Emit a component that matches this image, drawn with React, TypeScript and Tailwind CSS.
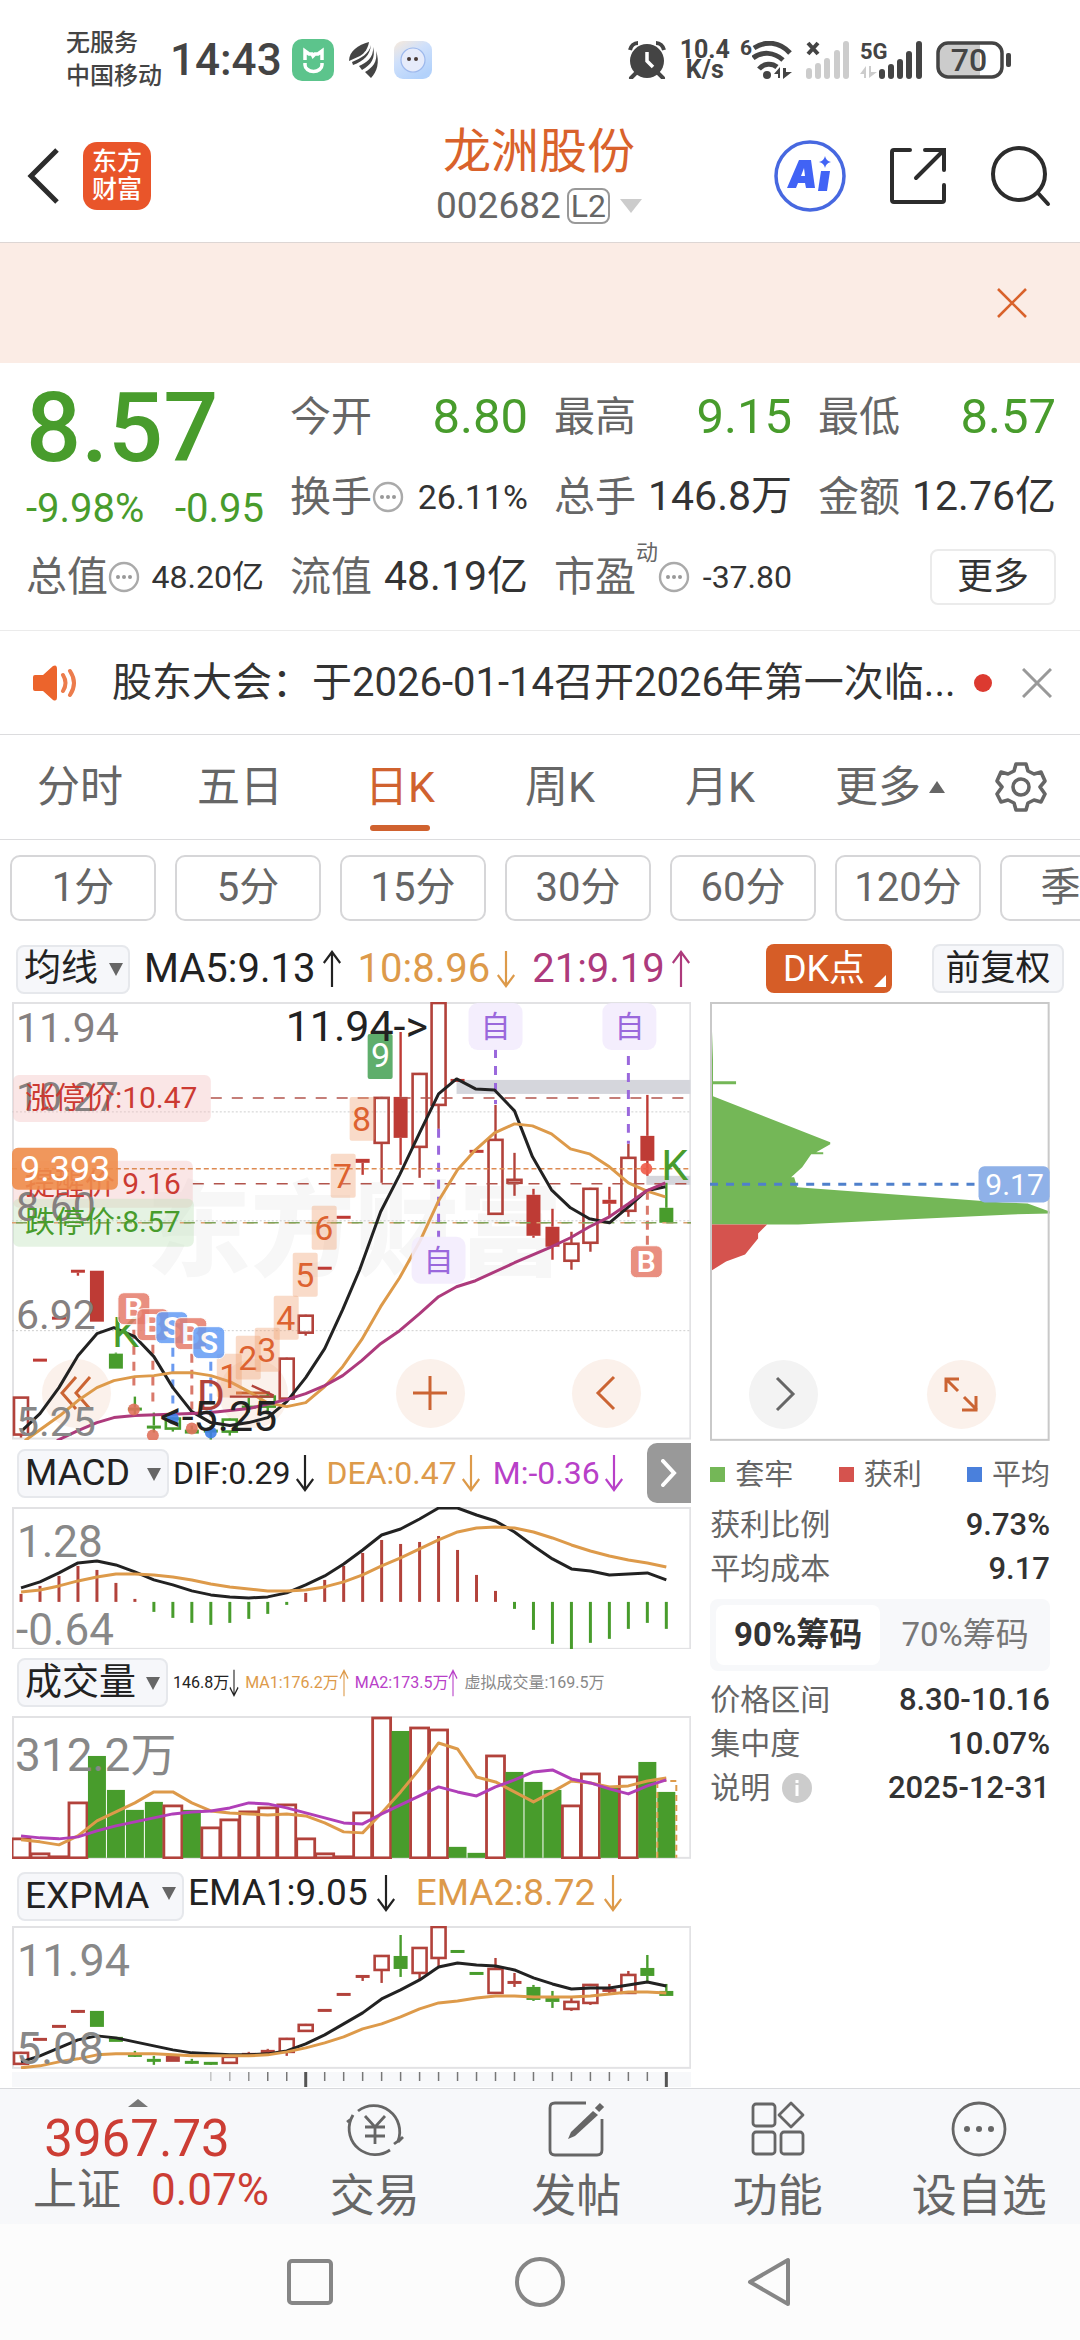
import { ReactNode } from 'react';
import clsx from 'clsx';

type Kind = 'up' | 'down' | 'green' | 'greenUp';
// [high, bodyTop, bodyBottom, low, kind]
type Candle = [number, number, number, number, Kind];

const STEP = 19;
const RED = '#b2423b';
const GREEN = '#489c2c';

const centerX = (index: number) => 9 + index * STEP;

const dailyCandles: Candle[] = [
  [396, 396, 433, 436, 'up'],
  [357, 357, 359, 359, 'down'],
  [315, 315, 317, 317, 'down'],
  [268, 268, 271, 274, 'down'],
  [269, 269, 320, 320, 'down'],
  [351, 352, 367, 367, 'green'],
  [395, 406, 408, 413, 'green'],
  [411, 424, 426, 431, 'green'],
  [416, 417, 427, 430, 'greenUp'],
  [424, 428, 432, 432, 'green'],
  [424, 428, 430, 438, 'green'],
  [417, 418, 430, 434, 'greenUp'],
  [396, 404, 406, 411, 'green'],
  [390, 395, 405, 410, 'greenUp'],
  [356, 357, 397, 397, 'up'],
  [313, 314, 331, 334, 'up'],
  [265, 265, 267, 267, 'down'],
  [214, 214, 216, 216, 'down'],
  [157, 157, 161, 173, 'down'],
  [95, 96, 141, 181, 'up'],
  [30, 95, 136, 163, 'down'],
  [71, 72, 145, 176, 'up'],
  [1, 1, 103, 127, 'up'],
  [77, 77, 79, 79, 'down'],
  [148, 148, 150, 150, 'down'],
  [103, 138, 212, 213, 'up'],
  [151, 178, 181, 194, 'up'],
  [187, 193, 234, 236, 'down'],
  [207, 225, 245, 258, 'down'],
  [230, 242, 259, 268, 'up'],
  [186, 187, 241, 250, 'up'],
  [185, 198, 202, 216, 'down'],
  [142, 156, 209, 215, 'up'],
  [93, 134, 159, 174, 'down'],
  [181, 206, 221, 221, 'green'],
];

const expmaCandles: Candle[] = [
  [126, 127, 138, 138, 'up'],
  [112, 112, 114, 114, 'down'],
  [99, 99, 101, 101, 'down'],
  [84, 84, 86, 87, 'down'],
  [85, 85, 101, 101, 'green'],
  [111, 111, 116, 116, 'green'],
  [125, 128, 130, 131, 'green'],
  [130, 133, 135, 139, 'green'],
  [130, 130, 136, 136, 'down'],
  [133, 135, 137, 138, 'green'],
  [136, 136, 138, 139, 'green'],
  [130, 131, 137, 137, 'up'],
  [126, 127, 130, 130, 'down'],
  [123, 124, 128, 130, 'down'],
  [112, 113, 126, 130, 'up'],
  [98, 99, 105, 106, 'up'],
  [83, 83, 85, 85, 'down'],
  [67, 67, 69, 69, 'down'],
  [49, 49, 51, 55, 'down'],
  [29, 30, 44, 57, 'up'],
  [9, 30, 43, 51, 'green'],
  [21, 22, 47, 53, 'up'],
  [1, 1, 32, 40, 'up'],
  [24, 24, 26, 26, 'green'],
  [46, 46, 48, 48, 'green'],
  [32, 43, 67, 67, 'up'],
  [47, 55, 58, 61, 'down'],
  [59, 61, 74, 75, 'green'],
  [65, 71, 76, 82, 'green'],
  [72, 76, 83, 85, 'up'],
  [58, 59, 77, 79, 'up'],
  [58, 63, 65, 69, 'down'],
  [45, 49, 67, 67, 'up'],
  [29, 42, 50, 57, 'green'],
  [58, 65, 70, 70, 'green'],
];

const ma5 =
  '9,430 28,412 47,386 66,354 85,332 102,326 123,335 142,355 161,386 180,410 199,421 218,424 237,421 256,416 275,400 294,376 313,347 331,308 348,268 369,210 388,173 408,131 427,92 445,77 464,87 483,88 503,109 521,155 540,188 559,206 578,217 598,221 617,205 635,189 654,185';
const ma10 =
  '13,439 48,414 66,399 85,386 102,379 123,375 142,374 161,371 180,371 199,374 218,380 237,390 255,401 275,405 294,401 313,385 331,365 350,338 369,305 388,276 408,240 427,199 446,168 464,148 483,131 503,122 521,124 540,132 559,147 578,152 598,165 617,181 635,189 654,195';
const ma21 =
  '45,439 66,429 85,421 102,416 123,414 180,412 199,411 237,407 275,398 294,392 313,384 331,374 350,359 369,342 388,329 408,312 427,295 445,285 464,279 503,261 540,245 559,236 578,225 598,215 617,202 635,189 654,181';

const macdBars = [
  87, 79, 69, 59, 63, 76, 92, 105, 111, 116, 118, 116, 112, 107, 98, 86, 73, 59, 46, 33, 37, 35, 29,
  43, 68, 84, 102, 123, 137, 143, 136, 132, 122, 116, 122,
];
const dif = [
  81, 75, 66, 56, 54, 58, 65, 73, 78, 84, 88, 90, 91, 90, 86, 78, 69, 57, 43, 28, 22, 12, 1, 1, 8, 14,
  25, 39, 52, 62, 64, 68, 67, 66, 73,
];
const dea = [
  85, 83, 79, 74, 70, 67, 67, 68, 70, 73, 77, 80, 82, 84, 84, 83, 80, 75, 68, 59, 51, 42, 33, 25, 21,
  20, 21, 25, 31, 38, 44, 49, 53, 56, 60,
];

const volumes = [
  122, 137, 140, 86, 40, 74, 94, 86, 89, 94, 111, 103, 95, 91, 88, 122, 137, 140, 96, 1, 15, 11, 13,
  131, 137, 39, 56, 66, 74, 89, 57, 70, 60, 46, 76,
];
const fallingDays = [4, 5, 6, 7, 9, 20, 23, 24, 26, 27, 28, 31, 33, 34];
const volMa1 = [
  124, 126, 129, 120, 105, 96, 87, 76, 76, 87, 95, 97, 98, 99, 98, 100, 107, 116, 117, 97, 76, 53, 27,
  33, 61, 66, 76, 86, 76, 65, 67, 71, 70, 65, 62,
];
const volMa2 = [
  120, 122, 123, 121, 115, 110, 106, 102, 98, 96, 95, 92, 87, 88, 92, 97, 102, 107, 108, 98, 89, 80,
  71, 76, 80, 71, 64, 56, 54, 63, 67, 73, 78, 70, 64,
];

const ema1 = [
  136, 130, 122, 114, 110, 112, 116, 120, 124, 127, 128, 129, 129, 128, 125, 118, 109, 98, 87, 73, 64,
  54, 41, 37, 39, 40, 44, 52, 58, 63, 62, 62, 59, 56, 60,
];
const ema2 = [
  142, 140, 136, 133, 129, 128, 128, 128, 129, 130, 130, 130, 130, 129, 126, 122, 117, 111, 103, 98,
  91, 83, 77, 75, 72, 70, 70, 71, 71, 71, 70, 68, 66, 66, 67,
];

const toPoints = (values: number[]) => values.map((y, i) => `${centerX(i)},${y}`).join(' ');

interface LineProps {
  points: string;
  color: string;
  width?: number;
}

const Line = ({ points, color, width = 3 }: LineProps) => (
  <polyline points={points} fill="none" stroke={color} strokeWidth={width} strokeLinejoin="round" />
);

const Candles = ({ data, solid = '#be3b35' }: { data: Candle[]; solid?: string }) => (
  <g>
    {data.map(([high, top, bottom, low, kind], i) => {
      const x = centerX(i);
      const color = kind === 'green' || kind === 'greenUp' ? GREEN : kind === 'down' ? solid : RED;
      const hollow = kind === 'up' || kind === 'greenUp';
      return (
        <g key={i}>
          {high < top && <path d={`M${x} ${high}V${top}`} stroke={color} strokeWidth="2.4" />}
          {low > bottom && <path d={`M${x} ${bottom}V${low}`} stroke={color} strokeWidth="2.4" />}
          <rect
            x={x - 7}
            y={top}
            width={14}
            height={Math.max(bottom - top, 3)}
            fill={hollow ? 'none' : color}
            stroke={hollow ? color : 'none'}
            strokeWidth="2.6"
          />
        </g>
      );
    })}
  </g>
);

const Frame = ({ height }: { height: number }) => (
  <rect x="1" y="1" width="678" height={height - 2} fill="none" stroke="#e2e2e4" strokeWidth="2" />
);

const SelfMark = ({ x, y }: { x: number; y: number }) => (
  <g>
    <rect x={x} y={y} width="54" height="47" rx="9" fill="#f3ecfd" fillOpacity="0.9" />
    <text x={x + 27} y={y + 34} textAnchor="middle" fontSize="30" fill="#9a68dc">
      自
    </text>
  </g>
);

const TradeMark = ({ x, y, type }: { x: number; y: number; type: 'B' | 'S' }) => (
  <g opacity="0.9">
    <rect
      x={x}
      y={y}
      width="32"
      height="32"
      rx="6"
      fill={type === 'B' ? '#e67c6c' : '#649cf5'}
      stroke="#fff"
      strokeWidth="1"
      fillOpacity="0.95"
    />
    <text x={x + 16} y={y + 26} textAnchor="middle" fontSize="30" fontWeight="600" fill="#fff">
      {type}
    </text>
  </g>
);

const countMarks = [
  { n: 1, x: 205, y: 352 },
  { n: 2, x: 224, y: 334 },
  { n: 3, x: 243, y: 326 },
  { n: 4, x: 262, y: 294 },
  { n: 5, x: 281, y: 251 },
  { n: 6, x: 300, y: 204 },
  { n: 7, x: 319, y: 152 },
  { n: 8, x: 338, y: 95 },
];

const DailyChart = () => (
  <svg
    viewBox="0 0 680 438"
    className="pointer-events-none relative block h-auto w-full"
    role="img"
    aria-label="日K"
  >
    <text x="135" y="266" fontSize="104" fontWeight="800" fill="#f7f7f7">
      东方财富
    </text>
    <Frame height={438} />
    <g stroke="#cfcfcf" strokeWidth="1" strokeDasharray="2 2">
      <path d="M0 110H680M0 219H680M0 329H680" />
    </g>
    <rect x="445" y="78" width="234" height="14" fill="#d5d6dc" />
    <rect x="635" y="174" width="44" height="9" fill="#d5d6dc" />

    <Candles data={dailyCandles} />

    <path d="M122 328V384M141 343V400M180 352V408" stroke="#d9796b" strokeWidth="3" strokeDasharray="9 7" />
    <path d="M161 346V402M199 360V415" stroke="#6a9af0" strokeWidth="3" strokeDasharray="9 7" />
    <path d="M484 47V102M617 54V142M427 127V236" stroke="#9a68dc" strokeWidth="3" strokeDasharray="9 8" />
    <path d="M636 189V244" stroke="#d9796b" strokeWidth="3" strokeDasharray="9 6" />

    <rect x="1" y="73" width="198" height="47" rx="6" fill="#f3c4c4" fillOpacity="0.42" />
    <rect x="1" y="159" width="180" height="47" rx="6" fill="#f3c4c4" fillOpacity="0.42" />
    <rect x="1" y="197" width="181" height="48" rx="6" fill="#bfe0b8" fillOpacity="0.4" />
    <path d="M199 96H680M181 182H680" stroke="#b2544c" strokeWidth="1.5" strokeDasharray="11 10" />
    <path d="M0 167H680" stroke="#dd8a52" strokeWidth="1.5" strokeDasharray="5 3" />
    <path d="M0 221H680" stroke="#dca070" strokeWidth="1.5" strokeDasharray="11 10" />
    <path d="M4 221H680" stroke="#7fa45a" strokeWidth="1.5" strokeDasharray="11 10" />

    <g fontSize="41" fill="#858080">
      <text x="4" y="40">
        11.94
      </text>
      <text x="4" y="109">
        10.27
      </text>
      <text x="4" y="219">
        8.60
      </text>
      <text x="4" y="327">
        6.92
      </text>
    </g>
    <text x="13" y="106" fontSize="30" fill="#cc3a32">
      涨停价:10.47
    </text>
    <text x="13" y="192" fontSize="30" fill="#cc3a32">
      提醒价 9.16
    </text>
    <text x="13" y="230" fontSize="30" fill={GREEN}>
      跌停价:8.57
    </text>
    <rect x="0" y="146" width="106" height="42" rx="6" fill="#ee8c4a" fillOpacity="0.9" />
    <text x="8" y="179" fontSize="36" fill="#fff">
      9.393
    </text>

    <Line points={ma5} color="#222" />
    <Line points={ma10} color="#dd9a4a" />
    <Line points={ma21} color="#ad3a7c" />

    {countMarks.map(({ n, x, y }) => (
      <g key={n}>
        <rect x={x} y={y} width="25" height="44" rx="2" fill="#ee9a68" fillOpacity="0.36" />
        <text x={x + 12} y={y + 34} textAnchor="middle" fontSize="34" fill="#dd6230">
          {n}
        </text>
      </g>
    ))}
    <rect x="356" y="32" width="25" height="45" rx="2" fill="#5fae6c" />
    <text x="369" y="65" textAnchor="middle" fontSize="34" fill="#fff">
      9
    </text>

    <g fillOpacity="0.9">
      <circle cx="122" cy="408" r="6" fill="#e0725c" />
      <circle cx="141" cy="434" r="6" fill="#e0725c" />
      <circle cx="180" cy="427" r="6" fill="#e0725c" />
      <circle cx="635" cy="167" r="6" fill="#ee5a48" />
      <circle cx="161" cy="417" r="6" fill="#3f7fe8" />
      <circle cx="199" cy="431" r="6" fill="#3f7fe8" />
    </g>

    <text x="100" y="345" fontSize="43" fill={GREEN}>
      K
    </text>
    <text x="650" y="178" fontSize="43" fill={GREEN}>
      K
    </text>
    <text x="185" y="408" fontSize="43" fill={RED}>
      D
    </text>
    <path d="M240 384L262 394M218 395H262" fill="none" stroke={RED} strokeWidth="2.4" />

    <TradeMark x={106} y={291} type="B" />
    <TradeMark x={125} y={307} type="B" />
    <TradeMark x={144} y={310} type="S" />
    <TradeMark x={163} y={316} type="B" />
    <TradeMark x={181} y={325} type="S" />
    <TradeMark x={619} y={244} type="B" />
    <SelfMark x={457} y={1} />
    <SelfMark x={591} y={1} />
    <SelfMark x={400} y={235} />

    <text x="274" y="39" fontSize="43" fill="#222">
      11.94-&gt;
    </text>
    <text x="148" y="429" fontSize="43" fill="#222">
      &lt;-5.25
    </text>
    <text x="4" y="434" fontSize="41" fill="#888">
      5.25
    </text>
  </svg>
);

const ChipChart = () => (
  <svg
    viewBox="0 0 339 438"
    className="pointer-events-none relative block h-auto w-full"
    role="img"
    aria-label="筹码分布"
  >
    <path
      d="M0 1H1L3 58V79H26V82H3V94L120 140V142L106 150H113V152H101L92 165L81 175H84L87 185L292 200L317 201L339 209V211L301 212L88 222H0Z"
      fill="#74b757"
    />
    <path d="M0 222H57L48 231V236L35 252L16 259L0 269Z" fill="#d5534e" />
    <rect x="1" y="1" width="337" height="436" fill="none" stroke="#c9c9c9" strokeWidth="2" />
    <path d="M0 182H264" stroke="#4f80cb" strokeWidth="3" strokeDasharray="8 8" />
    <rect x="268" y="164" width="71" height="36" rx="6" fill="#8fb1e8" />
    <text x="304" y="193" textAnchor="middle" fontSize="30" fill="#fff">
      9.17
    </text>
  </svg>
);

const MacdChart = () => (
  <svg viewBox="0 0 680 143" className="block h-auto w-full" role="img" aria-label="MACD">
    <Frame height={143} />
    {macdBars.map((y, i) => (
      <path
        key={i}
        d={`M${centerX(i)} 95V${y}`}
        stroke={y < 95 ? RED : GREEN}
        strokeWidth="3"
      />
    ))}
    <Line points={toPoints(dif)} color="#222" />
    <Line points={toPoints(dea)} color="#dd9a4a" />
    <text x="5" y="50" fontSize="44" fill="#888">
      1.28
    </text>
    <text x="4" y="138" fontSize="44" fill="#888">
      -0.64
    </text>
  </svg>
);

const VolumeChart = () => (
  <svg viewBox="0 0 680 143" className="block h-auto w-full" role="img" aria-label="成交量">
    <Frame height={143} />
    {volumes.map((y, i) => {
      const x = i * STEP;
      return fallingDays.includes(i) ? (
        <rect key={i} x={x} y={y} width="18" height={142 - y} fill={GREEN} />
      ) : (
        <rect
          key={i}
          x={x}
          y={y + 1}
          width="18"
          height={141 - y}
          fill="none"
          stroke={RED}
          strokeWidth="2.8"
        />
      );
    })}
    <path d="M646 142V65H665V142" fill="none" stroke="#dd9a4a" strokeWidth="2" strokeDasharray="6 4" />
    <text x="3" y="55" fontSize="46" fill="#888">
      312.2万
    </text>
    <Line points={toPoints(volMa1)} color="#dd9a4a" />
    <Line points={toPoints(volMa2)} color="#b03fb8" />
  </svg>
);

const ExpmaChart = () => (
  <svg viewBox="0 0 680 143" className="block h-auto w-full" role="img" aria-label="EXPMA">
    <Frame height={143} />
    <Candles data={expmaCandles} solid={RED} />
    <Line points={toPoints(ema1)} color="#222" />
    <Line points={toPoints(ema2)} color="#dd9a4a" />
    <text x="5" y="50" fontSize="45" fill="#888">
      11.94
    </text>
    <text x="4" y="138" fontSize="45" fill="#888">
      5.08
    </text>
  </svg>
);

const Timeline = () => (
  <svg viewBox="0 0 680 15" className="mt-[3px] block h-auto w-full bg-[#f7f8fa]" aria-hidden="true">
    {Array.from({ length: 25 }, (_, i) => i + 10).map((i) => {
      const major = i === 15 || i === 34;
      return (
        <path
          key={i}
          d={`M${centerX(i)} 0V${major ? 15 : 9}`}
          stroke={major ? '#555' : '#777'}
          strokeWidth={major ? 3 : 1.5}
          opacity={i < 13 ? (i - 8) / 5 : 1}
        />
      );
    })}
  </svg>
);

const Arrow = ({ down = false, small = false }: { down?: boolean; small?: boolean }) => (
  <svg
    viewBox="0 0 22 38"
    className={small ? 'h-7 w-2.5 shrink-0' : 'h-[38px] w-5 shrink-0'}
    preserveAspectRatio="none"
    fill="none"
    stroke="currentColor"
    strokeWidth="2.4"
  >
    {down ? <path d="M11 1V36M2 25L11 36L20 25" /> : <path d="M11 37V2M2 13L11 2L20 13" />}
  </svg>
);

interface PickerProps {
  label: string;
  value: string;
  className?: string;
  arrow?: string;
}

const Picker = ({ label, value, className, arrow = 'right-2' }: PickerProps) => (
  <div className={clsx('relative h-[49px] shrink-0', className)}>
    <select
      aria-label={label}
      className="h-full w-full appearance-none rounded-lg border-2 border-[#e6e8ec] bg-[#f6f7fa] pl-1.5 text-[37px] leading-[44px] text-[#222]"
    >
      <option>{value}</option>
    </select>
    <svg viewBox="0 0 14 14" className={clsx('pointer-events-none absolute top-[18px] size-3.5', arrow)}>
      <path d="M0 1H14L7 14Z" fill="#666" />
    </svg>
  </div>
);

const More = () => (
  <svg viewBox="0 0 32 32" className="size-8 shrink-0" aria-hidden="true">
    <circle cx="16" cy="16" r="14" fill="none" stroke="#aaa" strokeWidth="2.4" />
    <g fill="#999">
      <circle cx="10" cy="16" r="2" />
      <circle cx="16" cy="16" r="2" />
      <circle cx="22" cy="16" r="2" />
    </g>
  </svg>
);

interface QuoteProps {
  label: string;
  value: string;
  className?: string;
  note?: string;
  more?: boolean;
}

const Quote = ({ label, value, className, note, more }: QuoteProps) => (
  <div className="flex h-20 items-center justify-between whitespace-nowrap">
    <span className="flex items-center text-[41px] leading-[48px] text-[#666]">
      {label}
      {note && <sup className="self-start text-[22px] leading-[22px]">{note}</sup>}
      {more && <More />}
    </span>
    <span className={className}>{value}</span>
  </div>
);

const RoundButton = ({ label, gray, children }: { label: string; gray?: boolean; children?: ReactNode }) => (
  <button
    type="button"
    aria-label={label}
    className={clsx(
      'flex size-[69px] items-center justify-center rounded-full',
      gray ? 'bg-[#f3f3f3] text-[#666]' : 'bg-[#fbf1eb] text-[#cb6433]'
    )}
  >
    <svg viewBox="0 0 36 36" className="size-9" fill="none" stroke="currentColor" strokeWidth="3">
      {children}
    </svg>
  </button>
);

const StatusBar = () => (
  <div className="flex h-[110px] items-center pt-2.5 pr-[68px] pl-[66px] text-[#444]">
    <div className="text-[24px] leading-[33px] font-medium">
      <div>无服务</div>
      <div>中国移动</div>
    </div>
    <span className="ml-2 text-[44px] leading-[48px] font-medium">14:43</span>
    <svg viewBox="0 0 42 42" className="ml-2.5 size-[42px]">
      <rect width="42" height="42" rx="10" fill="#5cc48c" />
      <path
        d="M13 21V12L17 15H20L21 17L23 15H26L30 12V21M13 24V26A8 6 0 0 0 30 26V24"
        fill="none"
        stroke="#fff"
        strokeWidth="3.5"
      />
    </svg>
    <svg viewBox="0 0 32 36" className="ml-3.5 h-9 w-8" fill="#444">
      <path d="M21 0C10 3 1 9 1 19L12 14C17 11 20 6 21 0Z" />
      <path d="M23 3C21 12 13 16 4 20L5 23C16 19 22 13 23 3Z" />
      <path d="M25 5C26 16 18 21 11 24L14 28C23 23 28 16 25 5Z" />
      <path d="M28 9C30 20 24 26 17 30L23 36C29 30 32 20 28 9Z" />
    </svg>
    <svg viewBox="0 0 38 38" className="ml-3.5 size-[38px]">
      <defs>
        <linearGradient id="bot" x1="0" y1="0" x2="0.6" y2="1">
          <stop offset="0" stopColor="#f8eadb" />
          <stop offset="0.45" stopColor="#cfe0fb" />
          <stop offset="1" stopColor="#b3d2fb" />
        </linearGradient>
      </defs>
      <rect width="38" height="38" rx="9" fill="url(#bot)" />
      <circle cx="19" cy="19" r="12" fill="#e6ebfa" stroke="#9db8ec" strokeWidth="1.2" />
      <circle cx="15" cy="18" r="2" fill="#4a3a35" />
      <circle cx="22" cy="18" r="2" fill="#4a3a35" />
    </svg>

    <svg viewBox="0 0 38 38" className="ml-auto size-[38px]" fill="none" stroke="#444">
      <circle cx="19" cy="20" r="17" fill="#444" stroke="none" />
      <path d="M2 9C3 5 6 2 10 2M36 9C35 5 32 2 28 2" strokeWidth="4" />
      <path d="M8 32L3 37M30 32L35 37" strokeWidth="4" strokeLinecap="round" />
      <path d="M19 11V20L25 26" stroke="#fff" strokeWidth="3.5" />
    </svg>
    <div className="ml-3.5 text-center text-[25px] leading-[20px] font-bold">
      <div>10.4</div>
      <div>K/s</div>
    </div>
    <span className="mb-6 ml-2.5 text-[21px] leading-[24px] font-bold">6</span>
    <svg viewBox="0 0 40 38" className="h-[38px] w-10" fill="none" stroke="#444">
      <path d="M2 7C13 0 27 0 38 12M1 17C10 10 22 11 31 19" strokeWidth="5" />
      <path d="M7 28C12 22 20 22 25 26" strokeWidth="5" />
      <circle cx="15" cy="34" r="4" fill="#444" stroke="none" />
      <path d="M22 33L28 26V37H26V33ZM31 27V38L40 31H34V27Z" fill="#444" stroke="none" />
    </svg>
    <svg viewBox="0 0 44 38" className="ml-3.5 h-[38px] w-11">
      <path d="M2 2L12 13M12 2L2 13" stroke="#444" strokeWidth="4" />
      <path d="M3 30V35M12 25V35M21 20V35M31 12V35M40 3V35" stroke="#ccc" strokeWidth="6" strokeLinecap="round" />
    </svg>
    <svg viewBox="0 0 62 38" className="ml-2.5 h-[38px] w-[62px]">
      <text x="0" y="18" fontSize="22" fontWeight="700" fill="#444">
        5G
      </text>
      <path d="M0 33L6 25V37H4V33ZM9 25V37L17 31H11V25Z" fill="#ccc" />
      <path d="M22 31V35M31 26V35M40 21V35M49 13V35M59 3V35" stroke="#444" strokeWidth="6" strokeLinecap="round" />
    </svg>
    <svg viewBox="0 0 76 38" className="ml-3.5 h-[38px] w-[76px]">
      <path d="M12 2H44V36H12Q2 36 2 26V12Q2 2 12 2Z" fill="#ccc" />
      <rect x="2" y="2" width="64" height="34" rx="10" fill="none" stroke="#444" strokeWidth="3.5" />
      <rect x="70" y="12" width="5" height="14" rx="2" fill="#444" />
      <text x="33" y="30" textAnchor="middle" fontSize="32" fontWeight="500" fill="#444">
        70
      </text>
    </svg>
  </div>
);

const Header = () => (
  <header className="grid h-[132px] grid-cols-[1fr_auto_1fr] items-center pr-7 pl-[26px]">
    <div className="flex items-center">
      <button type="button" aria-label="返回">
        <svg viewBox="0 0 34 56" className="h-14 w-[34px]" fill="none" stroke="#2c2c2c" strokeWidth="5">
          <path d="M31 2L5 28L31 54" />
        </svg>
      </button>
      <a
        href="#home"
        className="ml-[23px] flex size-[68px] flex-col items-center justify-center rounded-[14px] bg-[#e9552a] text-[25px] leading-[28px] font-medium text-white"
      >
        <span>东方</span>
        <span>财富</span>
      </a>
    </div>
    <div className="text-center">
      <h1 className="text-[48px] leading-[56px] text-[#d9622b]">龙洲股份</h1>
      <button type="button" className="flex items-center pt-1 text-[37px] leading-[44px] text-[#666]">
        002682
        <span className="ml-1.5 rounded-lg border-2 border-[#999] px-0.5 text-[32px] leading-[32px]">L2</span>
        <svg viewBox="0 0 22 14" className="ml-2.5 h-3.5 w-[22px]" fill="#ccc">
          <path d="M0 0H22L11 14Z" />
        </svg>
      </button>
    </div>
    <div className="flex items-center justify-end">
      <button type="button" aria-label="AI">
        <svg viewBox="0 0 72 72" className="size-[72px]">
          <circle cx="36" cy="36" r="34" fill="none" stroke="#4768e0" strokeWidth="3.5" />
          <path
            d="M13 48L25 20H37L41 48H32L31 43H24L22 48ZM27 36H31L30 28Z"
            fill="#4163f5"
            fillRule="evenodd"
          />
          <path d="M47 31H56L53 51H44Z" fill="#4163f5" />
          <path d="M51 16Q52 21 57 22Q52 23 51 28Q50 23 45 22Q50 21 51 16Z" fill="#4163f5" />
        </svg>
      </button>
      <button type="button" aria-label="分享" className="ml-[43px]">
        <svg viewBox="0 0 58 58" className="size-[58px]" fill="none" stroke="#2c2c2c" strokeWidth="4" strokeLinecap="round">
          <path d="M21 3H5Q3 3 3 5V53Q3 55 5 55H53Q55 55 55 53V38" />
          <path d="M36 3H55V23M54 4L27 31" />
        </svg>
      </button>
      <button type="button" aria-label="搜索" className="ml-[43px]">
        <svg viewBox="0 0 62 62" className="size-[62px]" fill="none" stroke="#2c2c2c" strokeWidth="4" strokeLinecap="round">
          <circle cx="29" cy="29" r="26" />
          <path d="M48 48L58 59" />
        </svg>
      </button>
    </div>
  </header>
);

const QuotePanel = () => (
  <section className="grid grid-cols-4 gap-x-[26px] border-b border-[#ebebeb] pt-3.5 pr-6 pb-[13px] pl-[26px] text-[#333]">
    <div className="row-span-2 text-[#489c2c]">
      <div className="pt-0.5 text-[97px] leading-[98px] font-medium">8.57</div>
      <div className="mt-3 flex justify-between text-[40px] leading-[40px]">
        <span>-9.98%</span>
        <span>-0.95</span>
      </div>
    </div>
    <Quote label="今开" value="8.80" className="text-[49px] text-[#489c2c]" />
    <Quote label="最高" value="9.15" className="text-[49px] text-[#489c2c]" />
    <Quote label="最低" value="8.57" className="text-[49px] text-[#489c2c]" />
    <Quote label="换手" value="26.11%" more className="text-[34px]" />
    <Quote label="总手" value="146.8万" className="text-[41px]" />
    <Quote label="金额" value="12.76亿" className="text-[41px]" />
    <Quote label="总值" value="48.20亿" more className="text-[32px]" />
    <Quote label="流值" value="48.19亿" className="text-[41px]" />
    <Quote label="市盈" value="-37.80" note="动" more className="text-[32px]" />
    <div className="flex items-center justify-end">
      <button type="button" className="h-14 rounded-lg border-2 border-[#ebebeb] px-[25px] text-[36px] leading-[50px]">
        更多
      </button>
    </div>
  </section>
);

const Notice = () => (
  <div className="flex h-[104px] items-center border-b border-[#dcdcde] pr-7 pl-[33px]">
    <svg viewBox="0 0 46 36" className="h-9 w-[46px] shrink-0">
      <path d="M2 10H10L20 1Q24 -1 24 4V32Q24 37 20 35L10 26H2Q0 26 0 24V12Q0 10 2 10Z" fill="#ec642c" />
      <path d="M30 10Q35 18 30 26M37 6Q45 18 37 30" fill="none" stroke="#ec7c4c" strokeWidth="4" strokeLinecap="round" />
    </svg>
    <a href="#notice" className="ml-[33px] text-[40px] leading-[48px] whitespace-nowrap text-[#333]">
      股东大会：于2026-01-14召开2026年第一次临...
    </a>
    <span className="ml-auto size-[18px] shrink-0 rounded-full bg-[#dc3a30]" />
    <button type="button" aria-label="关闭公告" className="ml-[30px]">
      <svg viewBox="0 0 30 30" className="size-[30px]" stroke="#999" strokeWidth="3">
        <path d="M1 1L29 29M29 1L1 29" />
      </svg>
    </button>
  </div>
);

const tabs = ['分时', '五日', '日K', '周K', '月K', '更多'];

const Tabs = () => (
  <nav className="flex h-[105px] border-b border-[#dcdcde] text-[43px] leading-[50px] text-[#666]">
    {tabs.map((tab) => (
      <button
        key={tab}
        type="button"
        className={clsx(
          'relative flex items-center justify-center',
          tab === '更多' ? 'w-1/6' : 'w-4/27',
          tab === '日K' && 'text-[#d0622f]'
        )}
      >
        {tab}
        {tab === '更多' && (
          <svg viewBox="0 0 16 12" className="ml-2 h-3 w-4" fill="#666">
            <path d="M0 12H16L8 0Z" />
          </svg>
        )}
        {tab === '日K' && <span className="absolute bottom-2 h-1.5 w-[60px] rounded-full bg-[#d0622f]" />}
      </button>
    ))}
    <button type="button" aria-label="设置" className="ml-[15px]">
      <svg viewBox="0 0 52 52" className="size-[52px]" fill="none" stroke="#666" strokeWidth="3.6">
        <path
          d="M21 3H31L33 10L39 13L46 11L50 20L45 26L50 33L46 41L39 39L33 42L31 49H21L19 42L13 39L6 41L2 33L7 26L2 20L6 11L13 13L19 10Z"
          strokeLinejoin="round"
        />
        <circle cx="26" cy="26" r="8" />
      </svg>
    </button>
  </nav>
);

const periods = ['1分', '5分', '15分', '30分', '60分', '120分', '季K'];

const IndicatorBar = () => (
  <div className="flex items-center pt-[23px] pr-4 pb-[9px] pl-4 text-[40px] leading-[48px] whitespace-nowrap">
    <Picker label="均线类型" value="均线" className="w-[114px]" arrow="right-[7px]" />
    <span className="ml-3.5 flex items-center gap-1.5 text-[#222]">
      MA5:9.13
      <Arrow />
    </span>
    <span className="ml-4 flex items-center gap-1.5 text-[#dd9a4a]">
      10:8.96
      <Arrow down />
    </span>
    <span className="ml-4 flex items-center gap-1.5 text-[#ad3a7c]">
      21:9.19
      <Arrow />
    </span>
    <button
      type="button"
      className="relative ml-auto h-[49px] w-[126px] rounded-lg bg-[#d65d27] pr-2.5 text-[36px] leading-[48px] text-white"
    >
      DK点
      <svg viewBox="0 0 12 12" className="absolute right-1.5 bottom-1.5 size-3" fill="#fff">
        <path d="M12 0V12H0Z" />
      </svg>
    </button>
    <button
      type="button"
      className="ml-10 h-[49px] w-[132px] rounded-lg border-2 border-[#e6e8ec] bg-[#f6f7fa] text-[35px] leading-[44px] text-[#222]"
    >
      前复权
    </button>
  </div>
);

const stats = [
  { label: '获利比例', value: '9.73%' },
  { label: '平均成本', value: '9.17' },
];

const ranges = [
  { label: '价格区间', value: '8.30-10.16' },
  { label: '集中度', value: '10.07%' },
  { label: '说明', value: '2025-12-31', info: true },
];

const StatRow = ({ label, value, info }: { label: string; value: string; info?: boolean }) => (
  <div className="flex h-11 items-center justify-between text-[30px] leading-[44px]">
    <dt className="flex items-center text-[#666]">
      {label}
      {info && (
        <svg viewBox="0 0 30 30" className="ml-3 size-[30px]">
          <circle cx="15" cy="15" r="15" fill="#ccc" />
          <path d="M15 12V23M15 7V10" stroke="#fff" strokeWidth="3" />
        </svg>
      )}
    </dt>
    <dd className="text-[31px] font-medium text-[#333]">{value}</dd>
  </div>
);

const ChipPanel = () => (
  <aside>
    <div className="relative">
      <div className="absolute inset-x-0 bottom-3 flex justify-between pr-[54px] pl-[39px]">
        <RoundButton label="右移" gray>
          <path d="M11 2L27 18L11 34" />
        </RoundButton>
        <RoundButton label="全屏">
          <path d="M3 16V3H16M3 3L15 15M33 20V34H19M34 34L21 21" />
        </RoundButton>
      </div>
      <ChipChart />
    </div>
    <div className="flex h-[62px] items-center justify-between pt-1.5 text-[29px] leading-[40px] text-[#666]">
      <span className="flex items-center gap-2.5">
        <i className="size-[15px] bg-[#74b757]" />
        套牢
      </span>
      <span className="flex items-center gap-2.5">
        <i className="size-[15px] bg-[#d5534e]" />
        获利
      </span>
      <span className="flex items-center gap-2.5">
        <i className="size-[15px] bg-[#4a80dc]" />
        平均
      </span>
    </div>
    <dl>
      {stats.map((row) => (
        <StatRow key={row.label} {...row} />
      ))}
    </dl>
    <div className="mt-2 mb-[7px] grid h-[72px] grid-cols-2 rounded-lg bg-[#f7f8fa] p-1.5 text-[33px] leading-[60px] whitespace-nowrap">
      <button type="button" className="rounded-lg bg-white font-bold text-[#333]">
        90%筹码
      </button>
      <button type="button" className="pl-1.5 text-[#777]">
        70%筹码
      </button>
    </div>
    <dl>
      {ranges.map((row) => (
        <StatRow key={row.label} {...row} />
      ))}
    </dl>
  </aside>
);

const ChartColumn = () => (
  <div className="min-w-0">
    <div className="relative">
      <div className="absolute inset-x-0 bottom-3 flex justify-between pr-[50px] pl-[30px]">
        <RoundButton label="快速左移">
          <path d="M17 2L3 18L17 34M31 2L17 18L31 34" />
        </RoundButton>
        <RoundButton label="缩小">
          <path d="M1 18H35" />
        </RoundButton>
        <RoundButton label="放大">
          <path d="M1 18H35M18 1V35" />
        </RoundButton>
        <RoundButton label="左移">
          <path d="M25 2L9 18L25 34" />
        </RoundButton>
      </div>
      <DailyChart />
    </div>

    <div className="flex h-[67px] items-center pl-[5px] text-[32px] whitespace-nowrap">
      <Picker label="副图指标一" value="MACD" className="w-[152px]" />
      <span className="ml-1 flex items-center gap-1 text-[#222]">
        DIF:0.29
        <Arrow down />
      </span>
      <span className="ml-3 flex items-center gap-1 text-[#dd9a4a]">
        DEA:0.47
        <Arrow down />
      </span>
      <span className="ml-3 flex items-center gap-1 text-[#b840c8]">
        M:-0.36
        <Arrow down />
      </span>
      <button
        type="button"
        aria-label="更多指标"
        className="ml-auto flex h-[60px] w-11 items-center justify-center rounded-l-[10px] bg-[#999]"
      >
        <svg viewBox="0 0 16 28" className="h-7 w-4" fill="none" stroke="#fff" strokeWidth="4" strokeLinecap="round">
          <path d="M2 2L13 14L2 26" />
        </svg>
      </button>
    </div>
    <MacdChart />

    <div className="flex h-[67px] items-center pl-[5px] text-[16px] whitespace-nowrap">
      <Picker label="副图指标二" value="成交量" className="w-[151px]" />
      <span className="ml-[5px] flex items-center text-[#222]">
        146.8万
        <Arrow down small />
      </span>
      <span className="ml-1.5 flex items-center text-[#dd9a4a]">
        MA1:176.2万
        <Arrow small />
      </span>
      <span className="ml-1.5 flex items-center text-[#b840c8]">
        MA2:173.5万
        <Arrow small />
      </span>
      <span className="ml-1.5 text-[#888]">虚拟成交量:169.5万</span>
    </div>
    <VolumeChart />

    <div className="flex h-[67px] items-center pl-[5px] text-[37px] whitespace-nowrap">
      <Picker label="副图指标三" value="EXPMA" className="w-[167px]" />
      <span className="ml-1 flex items-center gap-2 text-[#222]">
        EMA1:9.05
        <Arrow down />
      </span>
      <span className="ml-5 flex items-center gap-2 text-[#dd9a4a]">
        EMA2:8.72
        <Arrow down />
      </span>
    </div>
    <ExpmaChart />
    <Timeline />
  </div>
);

const navItems = [
  {
    label: '交易',
    icon: (
      <>
        <path d="M13 12A26 26 0 0 1 53 42L49 45M53 43L58 38M45 51A26 26 0 0 1 6 20L2 23M6 20L8 16" />
        <path d="M20 17L30 28L40 17M30 28V45M20 28H40M20 37H40" />
      </>
    ),
  },
  {
    label: '发帖',
    icon: (
      <>
        <path d="M40 4H9Q4 4 4 9V51Q4 56 9 56H51Q56 56 56 51V20" />
        <path d="M47 12L52 16L29 37L22 40L25 33Z" fill="#666" stroke="none" />
        <path d="M51 11L56 6" strokeWidth="6" />
      </>
    ),
  },
  {
    label: '功能',
    icon: (
      <>
        <rect x="5" y="5" width="22" height="22" rx="3" />
        <rect x="5" y="33" width="22" height="22" rx="3" />
        <rect x="33" y="33" width="22" height="22" rx="3" />
        <path d="M43 4L55 16L43 28L31 16Z" strokeLinejoin="round" />
      </>
    ),
  },
  {
    label: '设自选',
    icon: (
      <>
        <circle cx="30" cy="30" r="26" />
        <g fill="#666" stroke="none">
          <circle cx="18" cy="30" r="3" />
          <circle cx="30" cy="30" r="3" />
          <circle cx="42" cy="30" r="3" />
        </g>
      </>
    ),
  },
];

const BottomNav = () => (
  <nav className="flex h-[136px] border-t border-[#d8d9dd] bg-[#f7f8fa]">
    <a href="#index" className="relative w-[274px] shrink-0 pt-[25px] text-center text-[#cc3d34]">
      <svg viewBox="0 0 20 8" className="absolute top-2.5 left-32 h-2 w-5" fill="#777">
        <path d="M0 8H20L10 0Z" />
      </svg>
      <div className="text-[51px] leading-[50px]">3967.73</div>
      <div className="flex items-center justify-center gap-[30px] pl-7 text-[44px] leading-[52px]">
        <span className="text-[#666]">上证</span>
        0.07%
      </div>
    </a>
    {navItems.map(({ label, icon }) => (
      <button key={label} type="button" className="flex flex-1 flex-col items-center pt-2.5 text-[45px] leading-[76px] text-[#666]">
        <svg viewBox="0 0 60 60" className="size-[60px] shrink-0" fill="none" stroke="#666" strokeWidth="2.8">
          {icon}
        </svg>
        {label}
      </button>
    ))}
  </nav>
);

const SystemNav = () => (
  <div className="flex h-[116px] items-center justify-center gap-[180px] bg-[#fcfcfc]">
    <button type="button" aria-label="最近任务">
      <svg viewBox="0 0 50 50" className="size-[50px]" fill="none" stroke="#868686" strokeWidth="4">
        <rect x="4" y="4" width="42" height="42" rx="3" />
      </svg>
    </button>
    <button type="button" aria-label="主屏幕">
      <svg viewBox="0 0 50 50" className="size-[50px]" fill="none" stroke="#868686" strokeWidth="4">
        <circle cx="25" cy="25" r="23" />
      </svg>
    </button>
    <button type="button" aria-label="返回上一级">
      <svg viewBox="0 0 50 50" className="size-[50px]" fill="none" stroke="#868686" strokeWidth="4" strokeLinejoin="round">
        <path d="M43 3V47L5 25Z" />
      </svg>
    </button>
  </div>
);

const App = () => (
  <div className="flex min-h-screen flex-col overflow-hidden bg-white font-[Roboto,'Noto_Sans_CJK_SC',sans-serif]">
    <StatusBar />
    <Header />
    <div className="flex h-[121px] items-center justify-end border-t border-[#ddd6d4] bg-[#fbece5] pr-[53px]">
      <button type="button" aria-label="关闭">
        <svg viewBox="0 0 30 30" className="size-[30px]" stroke="#d9622b" strokeWidth="2.6">
          <path d="M1 1L29 29M29 1L1 29" />
        </svg>
      </button>
    </div>
    <QuotePanel />
    <Notice />
    <Tabs />
    <div className="flex gap-[19px] overflow-hidden pt-[15px] pl-2.5 text-[40px] leading-[62px] text-[#666]">
      {periods.map((period) => (
        <button key={period} type="button" className="w-[146px] shrink-0 rounded-[10px] border-2 border-[#d6d6d8]">
          {period}
        </button>
      ))}
    </div>
    <IndicatorBar />
    <main className="grid grid-cols-[2fr_1fr] gap-[19px] pr-[30px] pl-3">
      <ChartColumn />
      <ChipPanel />
    </main>
    <div className="mt-auto">
      <BottomNav />
      <SystemNav />
    </div>
  </div>
);

export default App;
